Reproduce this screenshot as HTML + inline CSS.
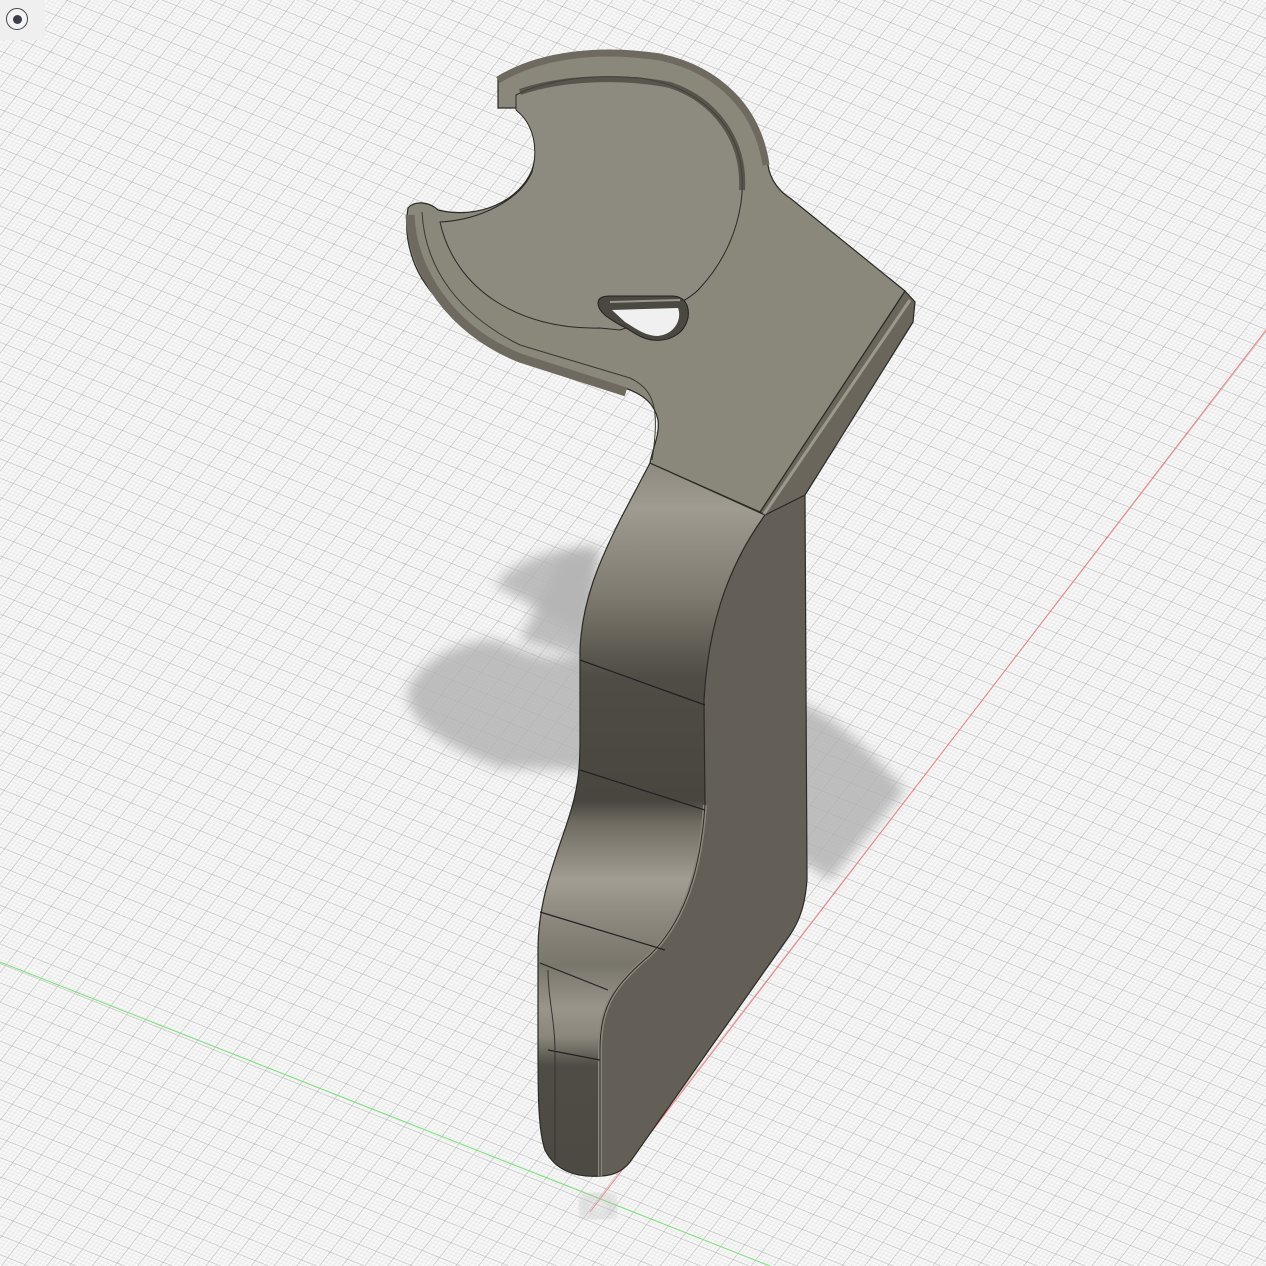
<!DOCTYPE html>
<html><head><meta charset="utf-8"><style>
html,body{margin:0;padding:0;width:1266px;height:1266px;overflow:hidden;background:#f6f6f6}
.bg{position:absolute;left:0;top:0;width:1266px;height:1266px;
background:
repeating-linear-gradient(202deg, transparent 0 17px, rgba(160,160,160,.35) 17px 18px),
repeating-linear-gradient(127.6deg, transparent 0 17px, rgba(160,160,160,.35) 17px 18px),
repeating-linear-gradient(202deg, transparent 0 2.6px, rgba(200,200,200,.22) 2.6px 3.6px),
repeating-linear-gradient(127.6deg, transparent 0 2.6px, rgba(200,200,200,.22) 2.6px 3.6px),
#f8f8f8;}
svg{position:absolute;left:0;top:0}
</style></head><body>
<div class="bg"></div>
<svg width="1266" height="1266" viewBox="0 0 1266 1266">
<defs>
<filter id="bl"><feGaussianBlur stdDeviation="6"/></filter>
<linearGradient id="fr" x1="0" y1="465" x2="0" y2="1180" gradientUnits="userSpaceOnUse">
<stop offset="0" stop-color="#8e8a7f"/>
<stop offset="0.06" stop-color="#9f9b90"/>
<stop offset="0.18" stop-color="#7f7b71"/>
<stop offset="0.27" stop-color="#59564d"/>
<stop offset="0.3" stop-color="#4e4c44"/>
<stop offset="0.47" stop-color="#48463f"/>
<stop offset="0.5" stop-color="#6f6b61"/>
<stop offset="0.58" stop-color="#a19d92"/>
<stop offset="0.64" stop-color="#8a867b"/>
<stop offset="0.7" stop-color="#79766c"/>
<stop offset="0.76" stop-color="#99958a"/>
<stop offset="0.8" stop-color="#8a867b"/>
<stop offset="0.84" stop-color="#4e4c44"/>
<stop offset="1" stop-color="#4c4a43"/>
</linearGradient>
</defs>
<line x1="0" y1="962" x2="770" y2="1266" stroke="#7be07b" stroke-width="1"/>
<line x1="1266" y1="330" x2="590" y2="1212" stroke="#f08080" stroke-width="1"/>
<path d="M495,585 C520,555 560,548 592,548 L585,650 C560,668 520,650 495,640 C460,640 420,660 408,690 C405,720 440,745 500,768 L580,770 L700,800 L800,860 L830,880 L905,790 C860,740 820,700 760,690 L700,700 Z" fill="#b4b4b4" filter="url(#bl)" opacity="0.85"/>
<path d="M560,560 L600,545 L590,660 L520,640 Z" fill="#b4b4b4" filter="url(#bl)" opacity="0.85"/>
<ellipse cx="598" cy="1206" rx="16" ry="11" fill="none" stroke="#bbb" stroke-width="6" filter="url(#bl)" opacity="0.8"/>
<!-- right side face -->
<path d="M760,515 L805,495 L807,880 C805,905 800,920 790,935 L630,1162 C622,1172 612,1176 600,1176 L580,1100 L580,950 L650,880 L680,700 C690,620 720,570 760,515 Z" fill="#645f56" stroke="#2a2a26" stroke-width="1.2"/>
<!-- front curved face -->
<path d="M650,463 L765,515 C725,570 708,630 704,700 L705,805 C700,880 680,925 650,955 C615,985 600,1005 600,1050 L600,1176 C575,1178 555,1170 545,1150 C538,1130 538,1090 538,1050 L538,950 C538,900 555,860 568,820 C578,790 580,770 580,740 L580,650 C582,600 600,560 620,520 Z" fill="url(#fr)" stroke="#2a2a26" stroke-width="1.2"/>
<path d="M705,805 C700,880 680,925 650,955 C615,985 600,1005 600,1050 L600,1176" stroke="#8a867b" stroke-width="4" fill="none"/>
<path d="M705,805 C700,880 680,925 650,955 C615,985 600,1005 600,1050 L600,1176" stroke="#2a2a26" stroke-width="1" fill="none"/>
<path d="M580,660 L705,705 M580,770 L705,810 M540,912 L665,950 M540,963 L608,990 M548,1050 L600,1060" stroke="#222" stroke-width="1.2" fill="none"/>
<path d="M555,1050 L555,1160 M548,970 C548,1000 555,1020 555,1050" stroke="#333" fill="none"/>
<!-- edge strip -->
<path d="M905,291 L915,302 L913,322 L805,495 L765,515 L760,512 Z" fill="#6a665c" stroke="#2a2a26" stroke-width="1.2"/>
<line x1="910" y1="300" x2="764" y2="514" stroke="#9c988d" stroke-width="3"/>
<!-- top plate -->
<path d="M498,78 C540,52 600,46 660,55 C720,68 760,110 768,165 C770,180 780,192 790,198 L905,291 L760,512 L650,463 C652,450 660,435 658,420 C655,405 645,395 625,388 L520,355 C470,335 430,300 415,265 C407,245 405,225 408,208 C415,200 430,202 438,210 C480,220 520,200 532,170 C540,145 535,120 518,108 L498,108 Z" fill="#8a877b" stroke="#2a2a26" stroke-width="1.2"/>
<path d="M410,215 C412,270 450,330 520,358 L626,392" stroke="#6e6a60" stroke-width="9" fill="none"/>
<path d="M498,80 C540,54 600,48 660,57 C720,70 758,110 766,165" stroke="#6e6a60" stroke-width="7" fill="none"/>
<path d="M422,212 C425,270 460,315 520,345 L630,378 C655,390 660,410 652,460" stroke="#3a3832" stroke-width="1" fill="none"/>
<!-- recess -->
<path d="M440,222 C455,290 520,330 600,328 L620,330 C650,320 690,300 700,288 C735,250 748,200 740,160 C730,115 690,85 640,78 C590,74 545,80 516,95 L516,110 C535,125 538,150 532,172 C520,200 480,220 440,222 Z" fill="#8d8a7f" stroke="#2a2a26" stroke-width="1"/>
<path d="M520,92 C560,78 620,75 670,85 C715,100 745,140 742,190" stroke="#4a4740" stroke-width="6" fill="none" opacity="0.8"/>
<!-- slot -->
<path d="M598,303 C598,297 604,296 610,296 L672,296 C684,296 690,305 688,318 C684,335 668,342 652,340 C638,338 632,330 620,325 C608,318 598,312 598,303 Z" fill="#4a4840" stroke="#222" stroke-width="1"/>
<path d="M612,310 L678,308 C682,318 676,334 658,336 C645,336 635,328 625,322 Z" fill="#f0f0f0"/>
<line x1="610" y1="302" x2="680" y2="300" stroke="#9a968b" stroke-width="2"/>
</svg>
<div style="position:absolute;left:0;top:0;width:45px;height:40px;background:#efefef"></div>
<div style="position:absolute;left:6px;top:8px;width:22px;height:22px;border-radius:50%;background:#f4f4f6;border:1.5px solid #444;box-sizing:border-box"></div>
<div style="position:absolute;left:13px;top:15px;width:9px;height:9px;border-radius:50%;background:#3c3f48"></div>
</body></html>
